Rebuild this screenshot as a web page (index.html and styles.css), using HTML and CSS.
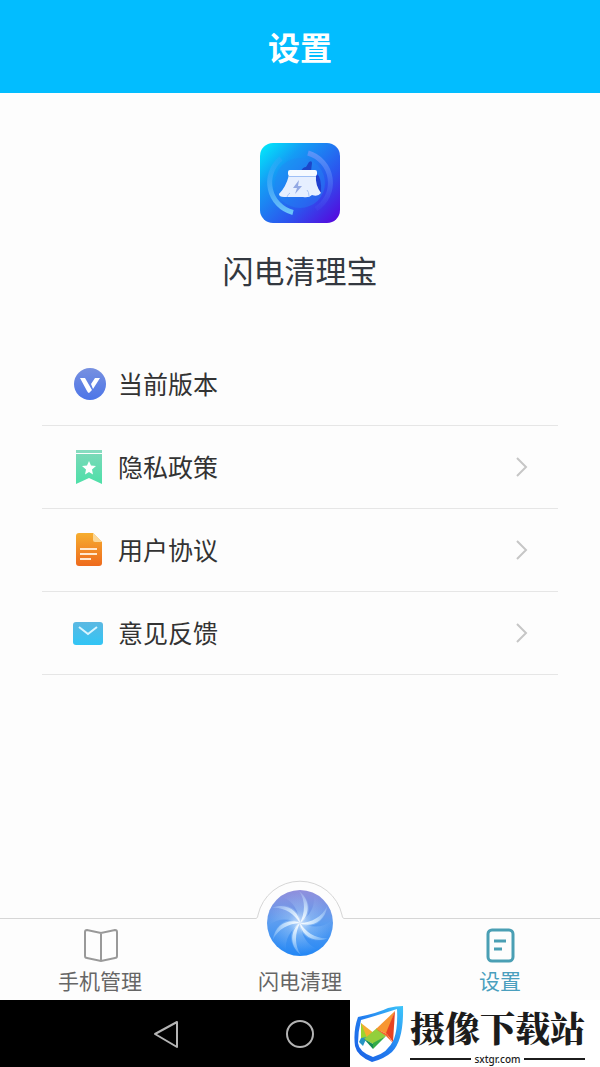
FILE: index.html
```html
<!DOCTYPE html>
<html lang="zh-CN">
<head>
    <meta charset="UTF-8">
    <meta name="viewport" content="width=device-width, initial-scale=1.0">
    <title>设置</title>
    <link rel="stylesheet" href="styles.css">
</head>
<body>
    <header class="header">
        <h1>设置</h1>
    </header>

    <main class="content">
        <!-- App logo and name -->
        <section class="app-info">
            <svg class="app-logo" viewBox="0 0 80 80" aria-hidden="true">
                <defs>
                    <linearGradient id="logo-bg" x1="0" y1="0" x2="1" y2="1">
                        <stop offset="0" stop-color="#00f0fb"/>
                        <stop offset="0.28" stop-color="#149df5"/>
                        <stop offset="0.65" stop-color="#2b55ee"/>
                        <stop offset="1" stop-color="#5a00dc"/>
                    </linearGradient>
                    <linearGradient id="logo-ring" x1="0" y1="1" x2="0" y2="0">
                        <stop offset="0" stop-color="#6cc4fa"/>
                        <stop offset="1" stop-color="#3fa4f6" stop-opacity="0.3"/>
                    </linearGradient>
                    <linearGradient id="logo-ring-right" x1="0" y1="0" x2="0" y2="1">
                        <stop offset="0" stop-color="#5a94f8"/>
                        <stop offset="1" stop-color="#4a5cf0" stop-opacity="0.2"/>
                    </linearGradient>
                </defs>
                <rect width="80" height="80" rx="13" fill="url(#logo-bg)"/>
                <circle cx="40" cy="40" r="25" fill="#2388f2" opacity="0.4"/>
                <path d="M48 10a31 31 0 0 1 8 56" fill="none" stroke="url(#logo-ring-right)" stroke-width="5"/>
                <path d="M33 69.500a31 31 0 0 1 -12 -54" fill="none" stroke="url(#logo-ring)" stroke-width="5"/>
                <path d="M41 28q2-4 5-4l3-5q3-2 3 1l-1 8z" fill="#1c45c8"/>
                <path d="M56 30q6 4 5 20l-6 1z" fill="#203fcf"/>
                <path d="M29 32h27q-1 10 5 18-3 4-9 2-3 3-9 2H24q-5 0-5-3 7-7 10-19z" fill="#e6efff"/>
                <rect x="28" y="27" width="29" height="6" rx="2" fill="#f6faff"/>
                <path d="M29 33.500h27" stroke="#9fc0f6" stroke-width="1"/>
                <path d="M27 54q1-3 3-4M49 53q0-4-2-6" fill="none" stroke="#a9c4f4" stroke-width="1"/>
                <path d="M39 37l-6 8h4l-2 6 7-8h-4z" fill="#93a9e4"/>
            </svg>
            <h2>闪电清理宝</h2>
        </section>

        <!-- Settings list -->
        <ul class="menu">
            <li>
                <div class="menu-item">
                    <svg class="menu-icon" viewBox="0 0 34 34" aria-hidden="true">
                        <defs>
                            <linearGradient id="version-bg" x1="0" y1="0" x2="0" y2="1">
                                <stop offset="0" stop-color="#7790e0"/>
                                <stop offset="1" stop-color="#4c75e8"/>
                            </linearGradient>
                        </defs>
                        <circle cx="18" cy="17" r="16" fill="url(#version-bg)"/>
                        <path d="M8 11h5l7 12-3 3q-1 0-2-2zM19 17l4-6h5l-7 11z" fill="#fff"/>
                    </svg>
                    <span>当前版本</span>
                </div>
            </li>
            <li>
                <a class="menu-item" href="#privacy">
                    <svg class="menu-icon" viewBox="0 0 34 34" aria-hidden="true">
                        <defs>
                            <linearGradient id="privacy-bg" x1="0" y1="0" x2="0" y2="1">
                                <stop offset="0" stop-color="#79d9b8"/>
                                <stop offset="1" stop-color="#4de0a8"/>
                            </linearGradient>
                        </defs>
                        <path d="M4 0h26v3H4z" fill="#86dcc0"/>
                        <path d="M4 4h26v30l-13-6-13 6z" fill="url(#privacy-bg)"/>
                        <path d="M17 11l2 4.500 5 .5-4 3.500 1 5-4-2.500-4 2.500 1-5-4-3.500 5-.5z" fill="#fff"/>
                    </svg>
                    <span>隐私政策</span>
                    <svg class="arrow" viewBox="0 0 12 20" aria-hidden="true"><path d="M1 1l9 9-9 9"/></svg>
                </a>
            </li>
            <li>
                <a class="menu-item" href="#agreement">
                    <svg class="menu-icon" viewBox="0 0 34 34" aria-hidden="true">
                        <defs>
                            <linearGradient id="agreement-bg" x1="0" y1="0" x2="0" y2="1">
                                <stop offset="0" stop-color="#f6ae2f"/>
                                <stop offset="1" stop-color="#ee6a1d"/>
                            </linearGradient>
                        </defs>
                        <path d="M7 0h14l9 9v21q0 3-3 3H7q-3 0-3-3V3q0-3 3-3z" fill="url(#agreement-bg)"/>
                        <path d="M21 0l9 9h-7q-2 0-2-2z" fill="#fbd796"/>
                        <path d="M8 16h17M8 21h17M8 26h11" stroke="#ffe9cf" stroke-width="2"/>
                    </svg>
                    <span>用户协议</span>
                    <svg class="arrow" viewBox="0 0 12 20" aria-hidden="true"><path d="M1 1l9 9-9 9"/></svg>
                </a>
            </li>
            <li>
                <a class="menu-item" href="#feedback">
                    <svg class="menu-icon" viewBox="0 0 34 34" aria-hidden="true">
                        <defs>
                            <linearGradient id="feedback-bg" x1="0" y1="0" x2="0" y2="1">
                                <stop offset="0" stop-color="#5cb8e2"/>
                                <stop offset="1" stop-color="#31c5f5"/>
                            </linearGradient>
                        </defs>
                        <rect x="1" y="6" width="30" height="23" rx="3" fill="url(#feedback-bg)"/>
                        <path d="M7 11l9 7 9-7" fill="none" stroke="#d8f5ff" stroke-width="2"/>
                    </svg>
                    <span>意见反馈</span>
                    <svg class="arrow" viewBox="0 0 12 20" aria-hidden="true"><path d="M1 1l9 9-9 9"/></svg>
                </a>
            </li>
        </ul>
    </main>

    <!-- Bottom tabs -->
    <nav class="tabs">
        <a class="tab" href="#manage">
            <svg class="tab-icon" viewBox="0 0 36 36" aria-hidden="true">
                <path d="M19 6L5 3q-2 0-2 2v24q0 2 2 2l14 3 14-3q2 0 2-2V5q0-2-2-2zv28"/>
            </svg>
            <span>手机管理</span>
        </a>
        <a class="tab tab-main" href="#clean">
            <svg class="clean-icon" viewBox="0 0 90 84" aria-hidden="true">
                <defs>
                    <linearGradient id="fan-bg" x1="0" y1="0" x2="0" y2="1">
                        <stop offset="0" stop-color="#918fdc"/>
                        <stop offset="0.5" stop-color="#5b9df0"/>
                        <stop offset="1" stop-color="#2387f5"/>
                    </linearGradient>
                    <radialGradient id="blade" gradientUnits="userSpaceOnUse" cx="0" cy="0" r="31">
                        <stop offset="0" stop-color="#fff" stop-opacity="0.7"/>
                        <stop offset="0.4" stop-color="#c8e6ff" stop-opacity="0.3"/>
                        <stop offset="1" stop-color="#c4e4ff" stop-opacity="0"/>
                    </radialGradient>
                    <radialGradient id="blade-edge" gradientUnits="userSpaceOnUse" cx="0" cy="0" r="32">
                        <stop offset="0" stop-color="#fff"/>
                        <stop offset="0.5" stop-color="#dcf0ff" stop-opacity="0.7"/>
                        <stop offset="1" stop-color="#c4e4ff" stop-opacity="0.2"/>
                    </radialGradient>
                    <g id="fan-blade">
                        <path d="M0 0C11-5 13-22-1-32Q-12-30-18-26C-6-22-2-12 0 0z" fill="url(#blade)"/>
                        <path d="M0 0C9-6 12-22-1-32C6-22 5-10 0 0z" fill="url(#blade-edge)"/>
                    </g>
                </defs>
                <path d="M0 41V39.500H1Q3 39 3 36A43 43 0 0 1 87 36Q87 39 89 39.500H90V41z" fill="#fdfdfd"/>
                <path d="M0 39.500H1Q3 39 3 36A43 43 0 0 1 87 36Q87 39 89 39.500H90" fill="none" stroke="#d6d6d6"/>
                <circle cx="45" cy="44" r="33" fill="url(#fan-bg)"/>
                <g transform="translate(45 44)">
                    <use href="#fan-blade"/>
                    <use href="#fan-blade" transform="rotate(60)"/>
                    <use href="#fan-blade" transform="rotate(120)"/>
                    <use href="#fan-blade" transform="rotate(180)"/>
                    <use href="#fan-blade" transform="rotate(240)"/>
                    <use href="#fan-blade" transform="rotate(300)"/>
                </g>
            </svg>
            <span>闪电清理</span>
        </a>
        <a class="tab active" href="#settings" aria-current="page">
            <svg class="tab-icon" viewBox="0 0 36 36" aria-hidden="true">
                <rect x="6" y="3" width="25" height="31" rx="4"/>
                <path d="M12 14h12M12 22h8"/>
            </svg>
            <span>设置</span>
        </a>
    </nav>

    <!-- System bar -->
    <footer class="system-bar">
        <button type="button" aria-label="返回">
            <svg viewBox="0 0 30 30"><path d="M3 15L25 3v25z"/></svg>
        </button>
        <button type="button" aria-label="主页">
            <svg viewBox="0 0 30 30"><circle cx="15" cy="15" r="13"/></svg>
        </button>
        <button type="button" aria-label="最近">
            <svg viewBox="0 0 30 30"><rect x="3" y="3" width="24" height="24"/></svg>
        </button>
        <div class="brand">
            <svg class="brand-logo" viewBox="0 0 50 58" aria-hidden="true">
                <defs>
                    <linearGradient id="shield" x1="0" y1="1" x2="1" y2="0">
                        <stop offset="0" stop-color="#1a5fe4"/>
                        <stop offset="0.5" stop-color="#2380f0"/>
                        <stop offset="1" stop-color="#3ec6fa"/>
                    </linearGradient>
                </defs>
                <path fill-rule="evenodd" d="M4 12Q24 8 34 3 42 1 49 1 50 35 38 47 30 54 18 57 3 51 1 41-1 26 4 12zM7 15Q4 27 4 38 5 47 19 52 34 48 40 34 44 23 43 4 28 9 7 15z" fill="url(#shield)"/>
                <path d="M7 18l14 11-5 7-9-3z" fill="#f7ad2f"/>
                <path d="M7 18l6 15-6 4z" fill="#9ed32d"/>
                <path d="M7 33l6-1-4 9-4-4z" fill="#2694c5"/>
                <path d="M10 34l13-11 9 8-13 8z" fill="#93cf3c"/>
                <path d="M10 34l9 5v5z" fill="#168b55"/>
                <path d="M19 38l13-7-13 13z" fill="#35ac46"/>
                <path d="M41 6L22 24l11 5z" fill="#f79631"/>
                <path d="M41 6L32 28l7 9z" fill="#e74322"/>
                <path d="M22 24l11 5 6 9-7-7z" fill="#f4662b"/>
            </svg>
            <div class="brand-text">
                <strong>摄像下载站</strong>
                <small>sxtgr.com</small>
            </div>
        </div>
    </footer>
</body>
</html>
```

FILE: styles.css
```css
/* Global styles */
* {
    box-sizing: border-box;
}

body {
    font-family: "Noto Sans", "Noto Sans CJK SC", sans-serif;
    margin: 0;
    display: flex;
    flex-direction: column;
    min-height: 100vh;
    background-color: #fdfdfd;
    color: #333;
}

h1,
h2,
ul {
    margin: 0;
    padding: 0;
}

a {
    color: inherit;
    text-decoration: none;
}

svg {
    display: block;
    flex-shrink: 0;
}

/* Header styles */
.header {
    padding: 24px 0 21px;
    background-color: #02bdff;
    color: #fff;
    text-align: center;
}

.header h1 {
    font-size: 32px;
    line-height: 48px;
}

/* Content styles */
.content {
    flex: 1;
    padding: 50px 42px 0;
}

.app-info {
    display: flex;
    flex-direction: column;
    align-items: center;
    gap: 24px;
    padding-bottom: 48px;
}

.app-logo {
    width: 80px;
    height: 80px;
}

.app-info h2 {
    font-size: 31px;
    font-weight: normal;
    line-height: 48px;
    color: #333840;
}

/* Menu styles */
.menu {
    list-style: none;
}

.menu li {
    border-bottom: 1px solid #e6e6e6;
}

.menu-item {
    display: flex;
    align-items: center;
    gap: 12px;
    padding: 23px 30px;
    font-size: 25px;
    line-height: 36px;
}

.menu-icon {
    width: 34px;
    height: 34px;
}

.menu-item .arrow {
    width: 12px;
    height: 20px;
    margin-left: auto;
    fill: none;
    stroke: #c6c6c6;
    stroke-width: 2;
}

/* Bottom tabs styles */
.tabs {
    display: flex;
    border-top: 1px solid #d6d6d6;
}

.tab {
    position: relative;
    flex: 1;
    display: flex;
    flex-direction: column;
    align-items: center;
    justify-content: flex-end;
    height: 81px;
    padding-bottom: 4px;
    font-size: 21px;
    line-height: 30px;
    color: #666;
}

.tab-icon {
    width: 36px;
    height: 36px;
    margin-bottom: 3px;
    fill: none;
    stroke: #999;
    stroke-width: 2;
}

.tab.active {
    color: #4a9fbe;
}

.active .tab-icon {
    stroke: #4a9fb4;
    stroke-width: 3;
}

/* Round button that rises above the tab bar */
.clean-icon {
    position: absolute;
    top: -40px;
    left: 50%;
    width: 90px;
    height: 84px;
    transform: translateX(-50%);
}

/* System bar styles */
.system-bar {
    position: relative;
    display: flex;
    justify-content: center;
    height: 67px;
    background-color: #000;
}

.system-bar button {
    display: flex;
    align-items: center;
    justify-content: center;
    width: 133px;
    padding: 0;
    border: none;
    background: none;
}

.system-bar button svg {
    width: 30px;
    height: 30px;
    fill: none;
    stroke: #b4b4b4;
    stroke-width: 2;
    stroke-linejoin: round;
}

/* Site badge over the system bar */
.brand {
    position: absolute;
    right: 0;
    bottom: 0;
    display: flex;
    align-items: center;
    gap: 6px;
    width: 250px;
    height: 67px;
    padding-left: 4px;
    background-color: #fff;
    color: #1c1c1c;
}

.brand-logo {
    width: 50px;
    height: 58px;
}

.brand-text strong {
    display: block;
    font-family: "Noto Serif CJK SC", "Noto Sans CJK SC", serif;
    font-size: 35px;
    font-weight: 900;
    line-height: 50px;
}

.brand-text small {
    display: flex;
    align-items: center;
    gap: 3px;
    font-size: 10px;
    font-weight: 500;
    line-height: 14px;
}

.brand-text small::before,
.brand-text small::after {
    content: "";
    flex: 1;
    height: 2px;
    background-color: #1c1c1c;
}
```
